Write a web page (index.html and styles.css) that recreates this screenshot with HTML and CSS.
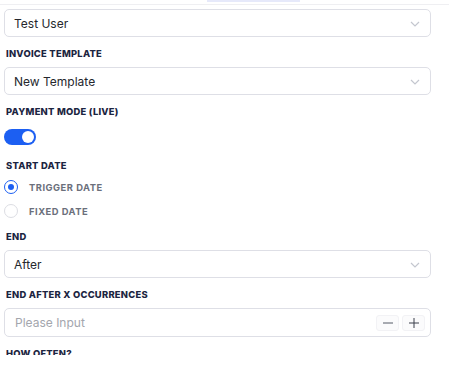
FILE: index.html
```html
<!DOCTYPE html>
<html lang="en">
<head>
    <meta charset="UTF-8">
    <meta name="viewport" content="width=device-width, initial-scale=1.0">
    <title>Recurring Invoice</title>
    <link rel="stylesheet" href="styles.css">
</head>
<body>
    <div class="topbar">
        <div class="tab-marker"></div>
    </div>

    <div class="form">
        <div class="select first">
            <span>Test User</span>
            <svg class="chevron" width="10" height="6" viewBox="0 0 10 6"><path d="M1 1l4 4 4-4" fill="none" stroke="#c4c7cf" stroke-width="1.2"/></svg>
        </div>

        <div class="label">Invoice Template</div>
        <div class="select">
            <span>New Template</span>
            <svg class="chevron" width="10" height="6" viewBox="0 0 10 6"><path d="M1 1l4 4 4-4" fill="none" stroke="#c4c7cf" stroke-width="1.2"/></svg>
        </div>

        <div class="label">Payment Mode (Live)</div>
        <div class="toggle on">
            <div class="knob"></div>
        </div>

        <div class="label start">Start Date</div>
        <div class="radios">
            <div class="radio checked"><span class="dot"></span>Trigger Date</div>
            <div class="radio"><span class="dot"></span>Fixed Date</div>
        </div>

        <div class="label end">End</div>
        <div class="select">
            <span>After</span>
            <svg class="chevron" width="10" height="6" viewBox="0 0 10 6"><path d="M1 1l4 4 4-4" fill="none" stroke="#c4c7cf" stroke-width="1.2"/></svg>
        </div>

        <div class="label">End After X Occurrences</div>
        <div class="number-input">
            <span class="placeholder">Please Input</span>
            <div class="steppers">
                <div class="step">
                    <svg width="10" height="10" viewBox="0 0 10 10"><path d="M0 5h10" stroke="#555a66" stroke-width="1"/></svg>
                </div>
                <div class="step">
                    <svg width="10" height="10" viewBox="0 0 10 10"><path d="M0 5h10M5 0v10" stroke="#3a3f4b" stroke-width="1"/></svg>
                </div>
            </div>
        </div>

        <div class="label">How Often?</div>
    </div>
</body>
</html>
```

FILE: styles.css
```css
body {
    font-family: Inter, "Noto Sans", sans-serif;
    margin: 0;
    padding: 0;
    background-color: #fff;
    height: 355px;
    overflow: hidden;
}

.topbar {
    height: 4px;
    border-bottom: 1px solid #efeff2;
    position: relative;
}

.tab-marker {
    position: absolute;
    left: 207px;
    top: 0;
    width: 93px;
    height: 2px;
    background-color: #e6e9fa;
}

.form {
    padding: 0 18px 0 4px;
    display: flex;
    flex-direction: column;
}

.select,
.number-input {
    height: 28px;
    box-sizing: border-box;
    border: 1px solid #dedfe6;
    border-radius: 5px;
    display: flex;
    align-items: center;
    justify-content: space-between;
    padding: 0 10px 0 9px;
    font-size: 12px;
    color: #25272d;
}

.select.first {
    margin-top: 4px;
}

.number-input {
    height: 29px;
    padding-left: 10px;
    padding-right: 5px;
}

.placeholder {
    color: #a3a6ad;
}

.chevron {
    margin-top: 1px;
}

.label {
    font-size: 9.4px;
    font-weight: 800;
    text-transform: uppercase;
    letter-spacing: 0.25px;
    color: #1c2541;
    line-height: 12px;
    margin: 11px 0 7px 2px;
}

.label.start {
    margin-top: 15px;
    margin-bottom: 8px;
}

.label.end {
    margin-top: 13px;
    margin-bottom: 7px;
}

.toggle {
    width: 32px;
    height: 16px;
    border-radius: 8px;
    background-color: #1c5ff2;
    position: relative;
    margin-top: 4px;
}

.knob {
    position: absolute;
    right: 2px;
    top: 2px;
    width: 12px;
    height: 12px;
    border-radius: 50%;
    background-color: #fff;
}

.radios {
    display: flex;
    flex-direction: column;
    gap: 10px;
}

.radio {
    display: flex;
    align-items: center;
    gap: 11px;
    height: 14px;
    font-size: 9.4px;
    font-weight: 700;
    letter-spacing: 0.5px;
    text-transform: uppercase;
    color: #6b6f7b;
}

.dot {
    width: 14px;
    height: 14px;
    box-sizing: border-box;
    border: 1px solid #dcdde3;
    border-radius: 50%;
    display: flex;
    align-items: center;
    justify-content: center;
}

.radio.checked .dot {
    border-color: #1c5ff2;
}

.radio.checked .dot::after {
    content: "";
    width: 6px;
    height: 6px;
    border-radius: 50%;
    background-color: #1c5ff2;
}

.steppers {
    display: flex;
    gap: 3px;
}

.step {
    width: 23px;
    height: 16px;
    box-sizing: border-box;
    border: 1px solid #f2f2f5;
    border-radius: 3px;
    background-color: #fbfbfc;
    display: flex;
    align-items: center;
    justify-content: center;
}
```
